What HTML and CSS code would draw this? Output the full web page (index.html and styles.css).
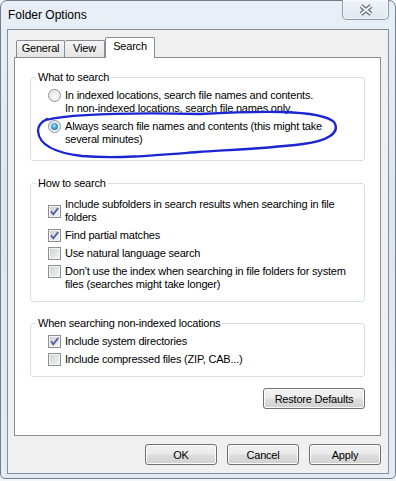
FILE: index.html
```html
<!DOCTYPE html>
<html lang="en">
<head>
    <meta charset="UTF-8">
    <title>Folder Options</title>
    <link rel="stylesheet" href="styles.css">
</head>
<body>
    <div class="window">
        <div class="titlebar">
            <span class="title">Folder Options</span>
            <button class="close-button" title="Close">
                <svg width="16" height="12" viewBox="0 0 16 12">
                    <path d="M3 2 L13 10 M13 2 L3 10" stroke="#5d6772" stroke-width="4.2" fill="none"/>
                    <path d="M3 2 L13 10 M13 2 L3 10" stroke="#eef1f4" stroke-width="2.2" fill="none"/>
                </svg>
            </button>
        </div>

        <div class="client">
            <div class="tabs">
                <div class="tab general">General</div>
                <div class="tab view">View</div>
                <div class="tab selected">Search</div>
            </div>

            <div class="panel">
                <fieldset class="group first">
                    <legend>What to search</legend>
                    <div class="options">
                        <label class="option">
                            <span class="radio"></span>
                            <span>In indexed locations, search file names and contents.<br>In non-indexed locations, search file names only.</span>
                        </label>
                        <label class="option">
                            <span class="radio checked"></span>
                            <span>Always search file names and contents (this might take<br>several minutes)</span>
                        </label>
                    </div>
                </fieldset>

                <fieldset class="group second">
                    <legend>How to search</legend>
                    <div class="options">
                        <label class="option centered">
                            <span class="check checked">
                                <svg width="11" height="11" viewBox="0 0 11 11"><path d="M2 5.3 L4.3 8.2 L9.2 2" fill="none" stroke="#4b5f9c" stroke-width="1.8"/></svg>
                            </span>
                            <span>Include subfolders in search results when searching in file<br>folders</span>
                        </label>
                        <label class="option">
                            <span class="check checked">
                                <svg width="11" height="11" viewBox="0 0 11 11"><path d="M2 5.3 L4.3 8.2 L9.2 2" fill="none" stroke="#4b5f9c" stroke-width="1.8"/></svg>
                            </span>
                            <span>Find partial matches</span>
                        </label>
                        <label class="option">
                            <span class="check"></span>
                            <span>Use natural language search</span>
                        </label>
                        <label class="option">
                            <span class="check"></span>
                            <span>Don’t use the index when searching in file folders for system<br>files (searches might take longer)</span>
                        </label>
                    </div>
                </fieldset>

                <fieldset class="group third">
                    <legend>When searching non-indexed locations</legend>
                    <div class="options">
                        <label class="option">
                            <span class="check checked">
                                <svg width="11" height="11" viewBox="0 0 11 11"><path d="M2 5.3 L4.3 8.2 L9.2 2" fill="none" stroke="#4b5f9c" stroke-width="1.8"/></svg>
                            </span>
                            <span>Include system directories</span>
                        </label>
                        <label class="option">
                            <span class="check"></span>
                            <span>Include compressed files (ZIP, CAB...)</span>
                        </label>
                    </div>
                </fieldset>

                <div class="restore-row">
                    <button class="button restore">Restore Defaults</button>
                </div>
            </div>

            <div class="footer">
                <button class="button">OK</button>
                <button class="button">Cancel</button>
                <button class="button">Apply</button>
            </div>
        </div>
    </div>

    <!-- hand-drawn marker round the chosen option -->
    <svg class="marker" width="396" height="481" viewBox="0 0 396 481">
        <path d="M46 120 C 75 113, 150 113, 200 114 C 255 111, 320 109, 334 122 C 341 133, 327 141, 303 144 C 262 149, 226 150, 198 152 C 160 155, 118 159, 82 156 C 56 153, 39 145, 38 131 C 38 125, 41 122, 47 119" fill="none" stroke="#1b26d2" stroke-width="2.3" stroke-linecap="round"/>
    </svg>
</body>
</html>
```

FILE: styles.css
```css
* {
    margin: 0;
    padding: 0;
    box-sizing: border-box;
}

body {
    font-family: "Liberation Sans", Arial, sans-serif;
    font-size: 11px;
    letter-spacing: -0.2px;
    color: #000;
    background: #f4f7fa;
    width: 396px;
    height: 481px;
    position: relative;
    overflow: hidden;
}

.window {
    width: 396px;
    height: 479px;
    border: 1px solid #6f7e8d;
    border-radius: 7px 7px 5px 5px;
    background: linear-gradient(180deg, #e8eff7 0%, #dde7f1 40%, #e4ebf3 100%);
    padding: 0 6px 4px 6px;
    display: flex;
    flex-direction: column;
}

.titlebar {
    height: 28px;
    display: flex;
    justify-content: space-between;
    align-items: flex-start;
}

.title {
    margin: 7px 0 0 1px;
    font-size: 12px;
    line-height: 15px;
    letter-spacing: 0;
}

.close-button {
    width: 47px;
    height: 20px;
    margin-top: -1px;
    border: 1px solid #8d9aa8;
    border-top: none;
    border-radius: 0 0 5px 5px;
    background: linear-gradient(180deg, #eef3f8 0%, #e1e8f0 100%);
    box-shadow: inset 0 0 0 1px rgba(255, 255, 255, 0.6);
    display: flex;
    align-items: center;
    justify-content: center;
}

.client {
    height: 445px;
    border: 1px solid #828f9c;
    background: #f0f0f0;
    padding: 7px 7px 8px 6px;
    display: flex;
    flex-direction: column;
}

.tabs {
    display: flex;
    align-items: flex-end;
    height: 20px;
    padding-left: 2px;
    position: relative;
    z-index: 1;
}

.tab {
    height: 17px;
    border: 1px solid #898c95;
    border-bottom: none;
    border-radius: 2px 2px 0 0;
    background: linear-gradient(180deg, #f5f5f5 0%, #e4e4e4 100%);
    padding-top: 1px;
    line-height: 13px;
    text-align: center;
}

.tab.general {
    width: 49px;
}

.tab.view {
    width: 40px;
    border-left: none;
}

.tab.selected {
    width: 50px;
    height: 21px;
    margin-bottom: -1px;
    padding-top: 2px;
    background: #fff;
}

.panel {
    flex: 1;
    background: #fff;
    border: 1px solid #898c95;
    padding: 13px 15px 0;
    display: flex;
    flex-direction: column;
}

.group {
    border: 1px solid #d5dfe5;
    border-radius: 3px;
    padding: 5px 0 14px 5px;
}

.group legend {
    padding: 0 2px;
    line-height: 13px;
}

.group.second {
    margin-top: 16px;
    padding-top: 8px;
    padding-bottom: 10px;
}

.group.third {
    margin-top: 15px;
    padding-bottom: 10px;
}

.options {
    padding-left: 12px;
    display: flex;
    flex-direction: column;
    gap: 5px;
}

.option {
    display: flex;
    align-items: flex-start;
    gap: 4px;
    line-height: 13px;
    white-space: nowrap;
}

.option.centered {
    align-items: center;
}

.radio {
    flex: none;
    width: 13px;
    height: 13px;
    border-radius: 50%;
    border: 1px solid #8f9194;
    background: radial-gradient(circle at 55% 60%, #fbfbfb 0%, #e2e2e2 70%, #d2d2d2 100%);
    box-shadow: inset 0 0 0 1px #f2f2f2;
    display: flex;
    align-items: center;
    justify-content: center;
}

.radio.checked::after {
    content: "";
    width: 7px;
    height: 7px;
    border-radius: 50%;
    background: radial-gradient(circle at 45% 40%, #b9ecff 0%, #46a8e2 40%, #13528c 100%);
}

.check {
    flex: none;
    width: 13px;
    height: 13px;
    border: 1px solid #8e8f8f;
    background: linear-gradient(135deg, #cbcdd0 0%, #eeeeee 80%, #f6f6f6 100%);
    box-shadow: inset 0 0 0 1px #f4f4f4;
    display: flex;
    align-items: center;
    justify-content: center;
}

.check svg {
    display: block;
}

.restore-row {
    display: flex;
    justify-content: flex-end;
    margin-top: 11px;
}

.button {
    height: 21px;
    border: 1px solid #707070;
    border-radius: 3px;
    background: linear-gradient(180deg, #f2f2f2 0%, #ebebeb 45%, #dddddd 55%, #d0d0d0 100%);
    box-shadow: inset 0 0 0 1px #fbfbfb;
    font: inherit;
    letter-spacing: inherit;
    color: #000;
}

.restore {
    width: 102px;
}

.footer {
    display: flex;
    justify-content: flex-end;
    gap: 10px;
    margin-top: 8px;
}

.footer .button {
    width: 72px;
}

.marker {
    position: absolute;
    left: 0;
    top: 0;
    pointer-events: none;
}
```
